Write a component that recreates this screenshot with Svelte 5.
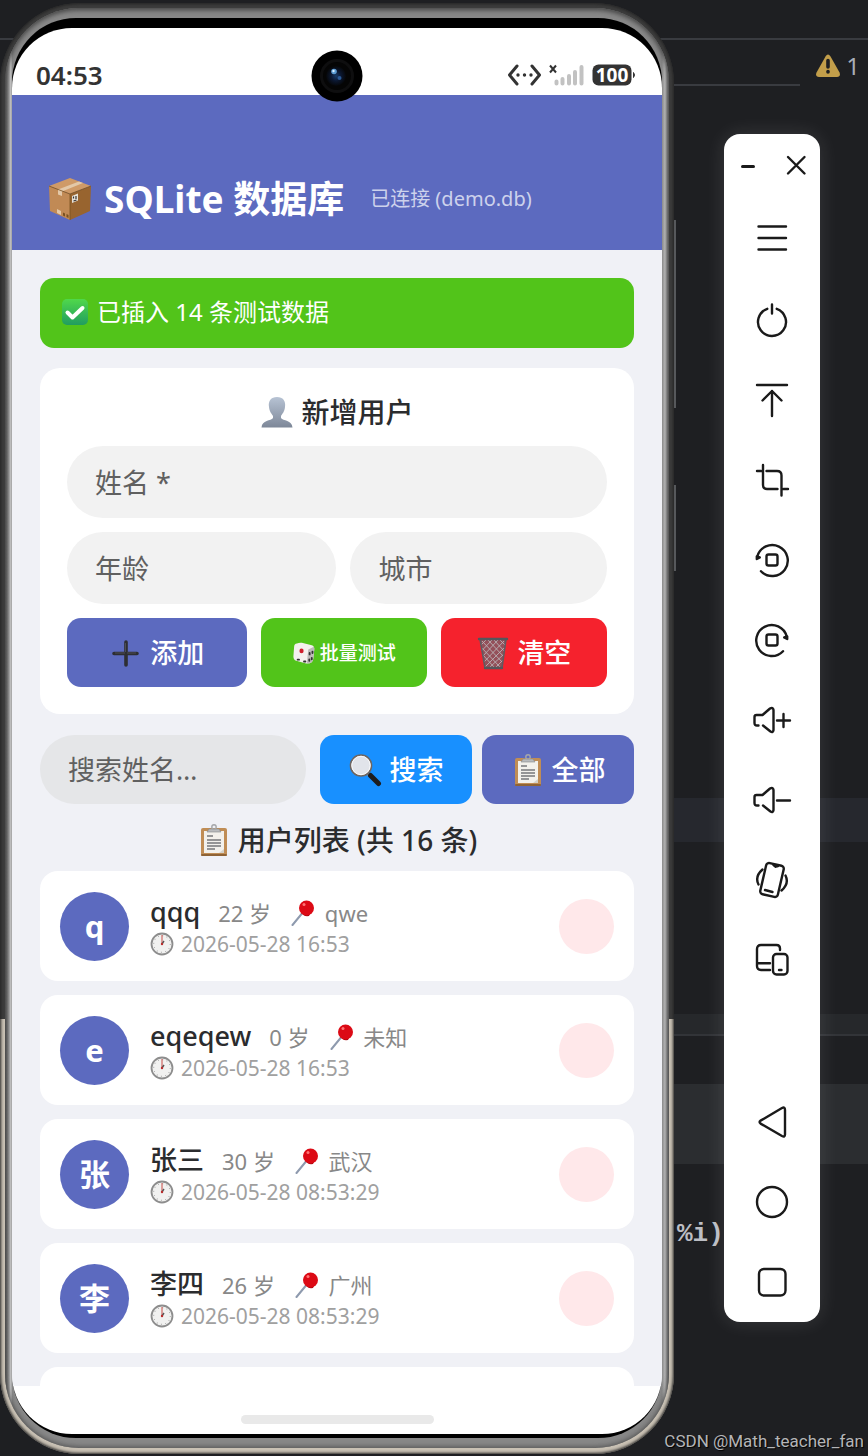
<script lang="ts">
  type User = { name: string; age: number; city: string; created: string };

  let users = $state<User[]>([
    { name: 'qqq', age: 22, city: 'qwe', created: '2026-05-28 16:53' },
    { name: 'eqeqew', age: 0, city: '未知', created: '2026-05-28 16:53' },
    { name: '张三', age: 30, city: '武汉', created: '2026-05-28 08:53:29' },
    { name: '李四', age: 26, city: '广州', created: '2026-05-28 08:53:29' },
  ]);

  let total = $state(16);
  let name = $state('');
  let age = $state('');
  let city = $state('');
  let keyword = $state('');

  const tools = ['menu', 'power', 'top', 'crop', 'left', 'right', 'louder', 'quieter', 'shake', 'devices'];
  const nav = ['back', 'home', 'recent'];
</script>

{#snippet clipboard()}
  <svg class="emoji" viewBox="0 0 34 34" aria-hidden="true">
    <rect x="4" y="5" width="26" height="28" rx="2" fill="#c08d55" />
    <rect x="4" y="31" width="26" height="2" rx="1" fill="#8f6335" />
    <path d="M7 8h20v22H7z" fill="#f3f1ec" />
    <path d="M22 30l5-4v4z" fill="#d5d2ca" />
    <path d="M10 13h6M10 17h14M10 20h14M10 23h14M10 26h8" stroke="#77777a" stroke-width="1.3" />
    <path d="M10 9l2-3h10l2 3z" fill="#b9bbbd" stroke="#85878a" stroke-width=".6" />
    <circle cx="17" cy="4" r="2.2" fill="none" stroke="#a5a7aa" stroke-width="1.4" />
  </svg>
{/snippet}

{#snippet tool(kind: string)}
  <svg class="tool" viewBox="0 0 40 40" aria-hidden="true">
    {#if kind === 'menu'}
      <path d="M6.500 6.500h27.500M6.500 18h27.500M6.500 29.500h27.500" />
    {:else if kind === 'power'}
      <path d="M15.300 8.800a14 14 0 1 0 9.400 0M20 4.500v9" />
    {:else if kind === 'top'}
      <path d="M5 5h30M20 36V11M10.500 20.500l9.500-9.500 9.500 9.500" />
    {:else if kind === 'crop'}
      <path d="M11 5v20q0 4 4 4h10.500M5 11h4M14.500 11H25q4.500 0 4.500 4.500V35.500M31.500 29H36" />
    {:else if kind === 'left' || kind === 'right'}
      <g transform={kind === 'right' ? 'translate(40 0) scale(-1 1)' : undefined}>
        <path d="M9 31.200A15.500 15.500 0 1 0 5.300 16.500" />
        <path d="M4.800 16.500v2.500l3-1.500z" fill="#1a1a1a" />
      </g>
      <rect x="14.500" y="14.500" width="11" height="11" rx="2" />
    {:else if kind === 'louder' || kind === 'quieter'}
      <path d="M6.500 25.500H5q-2.500 0-2.500-2.500v-6q0-2 2-2h6L18 8.500q3-1.500 3.500 1.500v20q-.5 3-3 1.500L11 25.500M25 20.500h13" />
      {#if kind === 'louder'}<path d="M31.500 14v13" />{/if}
    {:else if kind === 'shake'}
      <rect x="11" y="4" width="18" height="32" rx="3" transform="rotate(13 20 20)" />
      <path d="M21.500 5l2.200 1.700L26 6M13 30l7.500 2M10.500 9.500q-8 7-4 15M33.500 15.500q4 8-4 15" />
    {:else if kind === 'devices'}
      <path d="M18 30H9q-4 0-4-4V9q0-4 4-4h15.500q3.500 0 3.500 3.500V10M5 23.300h13" />
      <rect x="21" y="14" width="14.500" height="20.500" rx="3.500" />
      <path d="M27 30h2.500" />
    {:else if kind === 'back'}
      <path d="M8.600 18.600Q6.500 20 8.600 21.600L30 34q3 1.500 3-1.500V8q0-3.500-3-2z" />
    {:else if kind === 'home'}
      <circle cx="20" cy="20" r="15" />
    {:else}
      <rect x="7" y="7" width="26.500" height="26.500" rx="5" />
    {/if}
  </svg>
{/snippet}

<div class="desktop" lang="zh-CN">
  <div class="editor">
    <div class="line tabs"></div>
    <div class="line crumbs"></div>
    <div class="problems">
      <svg width="24" height="24" viewBox="0 0 24 24" aria-hidden="true">
        <path d="M9.500 2.500q2.500-4 5 0l9 16q1.500 4-2.500 4.500H3q-4-.5-2.500-4.500z" fill="#c29e4a" />
        <path d="M12 6.500v6.500M12 17.500v.5" stroke="#1e1f22" stroke-width="3.600" stroke-linecap="round" />
      </svg>
      <span>1</span>
    </div>
    <div class="band current"></div>
    <div class="band splitter"></div>
    <div class="band header"></div>
    <code>%i)</code>
  </div>

  <div class="phone">
    <i class="key volume"></i>
    <i class="key lock"></i>
    <div class="bezel">
      <div class="glass">
        <div class="screen">
          <div class="status">
            <time>04:53</time>
            <svg width="128" height="24" viewBox="0 0 128 24" aria-hidden="true">
              <path d="M9 3L1.500 12l7.500 9M24 3l7.500 9-7.500 9" fill="none" stroke="#333" stroke-width="3" stroke-linecap="round" stroke-linejoin="round" />
              <path d="M10 12h0M16.500 12h0M23 12h0" stroke="#333" stroke-width="3.400" stroke-linecap="round" />
              <path d="M42 2.500l6 7M48 2.500l-6 7" stroke="#333" stroke-width="2" />
              <path d="M48.500 18.500v2M54.500 16v4.500M61 13v7.500M67 9v11.500M73.500 4v16.500" stroke="#c2c2c2" stroke-width="4" stroke-linecap="round" />
              <rect x="84.500" y="1.500" width="39" height="21" rx="6" fill="#333" />
              <path d="M125.500 9.500q2 2.500 0 5z" fill="#333" stroke="#333" />
              <text x="104" y="19">100</text>
            </svg>
          </div>

          <header class="app-bar">
            <svg class="box" viewBox="0 0 44 44" aria-hidden="true">
              <path d="M1 9l21 8v26L2 34z" fill="#c18a55" />
              <path d="M22 17l21-8-1 25-20 9z" fill="#98642f" />
              <path d="M1 9L22 1l21 8-21 8z" fill="#cf9a67" />
              <path d="M10 12.500L31 4.500l4 1.500-21 8.500v4.500l-4-1.500z" fill="#e3c8a8" />
              <path d="M1 9l21 8 21-8M22 17v26" fill="none" stroke="#79501f" stroke-width=".8" />
              <path d="M24 19l6-2.500v7L24 26z" fill="#e8e2d8" />
              <path d="M25.500 19.500v2M28 19v3M25.500 24l3-1" stroke="#333" stroke-width="1.200" />
              <path d="M9 32l4 2v4l-4-2z" fill="#e3c8a8" />
              <path d="M15 35.500l2 1v3l-2-1zM18.500 37l2 1v3l-2-1z" fill="#79501f" />
            </svg>
            <h1>SQLite 数据库</h1>
            <p>已连接 (demo.db)</p>
          </header>

          <main>
            <div class="notice" role="status">
              <svg viewBox="0 0 28 28" aria-hidden="true">
                <defs>
                  <linearGradient id="tick" x2="0" y2="1">
                    <stop stop-color="#50d84b" />
                    <stop offset="1" stop-color="#219d60" />
                  </linearGradient>
                </defs>
                <rect x="1" y="1" width="26" height="26" rx="5" fill="url(#tick)" />
                <path d="M6.500 14.500l5 5 10-9.500" fill="none" stroke="#fff" stroke-width="4" stroke-linecap="round" stroke-linejoin="round" />
              </svg>
              已插入 14 条测试数据
            </div>

            <form class="panel" onsubmit={(e) => e.preventDefault()}>
              <h2>
                <svg class="emoji" viewBox="0 0 34 34" aria-hidden="true">
                  <defs>
                    <linearGradient id="bust" x2="0" y2="1">
                      <stop stop-color="#b7c3d4" />
                      <stop offset="1" stop-color="#7d8798" />
                    </linearGradient>
                  </defs>
                  <path d="M17 2c6 0 9 4 8 10-.5 5-3 7-4 9v2c2 3 11 2 11.500 9.500h-31C2 25 11 26 13 23v-2c-1-2-3.500-4-4-9-1-6 2-10 8-10z" fill="url(#bust)" />
                </svg>
                新增用户
              </h2>
              <input bind:value={name} placeholder="姓名 *" aria-label="姓名" />
              <div class="pair">
                <input bind:value={age} placeholder="年龄" aria-label="年龄" />
                <input bind:value={city} placeholder="城市" aria-label="城市" />
              </div>
              <div class="actions">
                <button class="primary">
                  <svg class="emoji" viewBox="0 0 34 34" aria-hidden="true">
                    <path d="M17 6v23M5 17.500h23" stroke="#2d2e32" stroke-width="3.600" stroke-linecap="round" />
                    <path d="M16.500 7v9M6 17h10M18 17h9" stroke="#55575d" stroke-width=".8" />
                  </svg>
                  添加
                </button>
                <button class="success small" type="button">
                  <svg class="emoji" viewBox="0 0 34 34" aria-hidden="true">
                    <path d="M3 8Q3 4 7 3.500Q10 2 14 2.500L28 6q4 1 3.500 6L30 26q-1 5-5 5.500L20 32 6 28q-4-1-4-6z" fill="#f4f1ee" />
                    <path d="M23 12l8-4q1 2 .5 5L30 26q-1 5-5 5.500l-4 .5z" fill="#bdbab8" />
                    <ellipse cx="13.500" cy="14" rx="3" ry="3.500" fill="#cf1f2c" />
                    <path d="M25 17v2M29 15v2M24.500 26v2M28 24v2M8 26.500h2M17 29h2" stroke="#333" stroke-width="2.600" stroke-linecap="round" />
                  </svg>
                  批量测试
                </button>
                <button class="danger" type="button">
                  <svg class="emoji" viewBox="0 0 34 34" aria-hidden="true">
                    <path d="M4 3h26l-4 29H9z" fill="#94505a" />
                    <path d="M5 9l5-5M5.500 15L16 4M7 20L22 4M8 26L28 5M9 31L29 11M14 31l14-13M20 31l7-7M29 9l-5-5M28 15L18 4M28 21L12 4M27 27L6 5M24 31L5 11M18 31L7 19" stroke="#b9b2b6" stroke-width=".9" />
                    <path d="M4 3h26l-4 29H9z" fill="none" stroke="#5f5a60" stroke-width="1.600" />
                    <path d="M3 3h28M9 32h17" stroke="#55565b" stroke-width="2.400" stroke-linecap="round" />
                  </svg>
                  清空
                </button>
              </div>
            </form>

            <div class="search">
              <input type="search" bind:value={keyword} placeholder="搜索姓名…" aria-label="搜索姓名" />
              <button class="info">
                <svg class="emoji" viewBox="0 0 34 34" aria-hidden="true">
                  <path d="M19 21l3 3" stroke="#999" stroke-width="3" />
                  <path d="M21.500 22.500l8 8" stroke="#1d1d1f" stroke-width="5" stroke-linecap="round" />
                  <circle cx="12" cy="12.500" r="10.500" fill="#e1e4ea" stroke="#6f6661" stroke-width="1.600" />
                  <circle cx="12" cy="12.500" r="9.200" fill="none" stroke="#fafafa" />
                </svg>
                搜索
              </button>
              <button class="primary">{@render clipboard()}全部</button>
            </div>

            <h2 class="list-title">{@render clipboard()}用户列表 (共 {total} 条)</h2>

            <ul>
              {#each users as user}
                <li>
                  <span class="avatar">{user.name[0]}</span>
                  <div class="info-col">
                    <div class="who">
                      <strong>{user.name}</strong>
                      <span>{user.age} 岁</span>
                      <span class="city">
                        <svg width="24" height="26" viewBox="0 0 24 26" aria-hidden="true">
                          <path d="M13 11L1.500 25" stroke="#8e9aae" stroke-width="2" stroke-linecap="round" />
                          <path d="M11 10q3 5 8 4l-1 2q-6 1-8-4z" fill="#a90710" />
                          <circle cx="15.500" cy="8" r="7.500" fill="#dc0a15" />
                          <circle cx="13" cy="4.500" r="1.500" fill="#ff7475" />
                        </svg>
                        {user.city}
                      </span>
                    </div>
                    <div class="when">
                      <svg width="24" height="24" viewBox="0 0 24 24" aria-hidden="true">
                        <circle cx="12" cy="12" r="10.500" fill="#f1f1f0" stroke="#8d8d8d" stroke-width="1.800" />
                        <circle cx="12" cy="12" r="8.300" fill="none" stroke="#999" stroke-width="1" stroke-dasharray="1 3.346" />
                        <path d="M12 12V3" stroke="#c94a45" />
                        <path d="M12 12l2-3" stroke="#555" stroke-width="1.400" />
                        <circle cx="12" cy="12" r="1.200" fill="#b92d2d" />
                      </svg>
                      {user.created}
                    </div>
                  </div>
                  <button class="remove" aria-label="删除"></button>
                </li>
              {/each}
              <li></li>
            </ul>
          </main>

          <div class="gesture"><i></i></div>
        </div>
      </div>
    </div>
    <svg class="camera" viewBox="0 0 52 52" aria-hidden="true">
      <defs>
        <radialGradient id="lens">
          <stop stop-color="#173a66" />
          <stop offset=".5" stop-color="#0b1730" />
          <stop offset="1" stop-color="#060709" />
        </radialGradient>
      </defs>
      <circle cx="26" cy="26" r="25.500" fill="#000" />
      <circle cx="26" cy="26" r="15.500" fill="#050505" stroke="#0e0e0f" stroke-width="3" />
      <circle cx="25" cy="26" r="10" fill="url(#lens)" />
      <circle cx="23" cy="21.500" r="2.800" fill="#5b9bd2" />
      <circle cx="22.500" cy="21" r="1.200" fill="#d8f0ff" />
      <circle cx="28.500" cy="28" r="2" fill="#2b5a96" />
    </svg>
  </div>

  <aside>
    <div class="window">
      <button aria-label="Minimize">
        <svg class="tool" viewBox="0 0 40 40" aria-hidden="true"><path d="M14.500 21.500h11" stroke-width="3" /></svg>
      </button>
      <button aria-label="Close">
        <svg class="tool" viewBox="0 0 40 40" aria-hidden="true"><path d="M12 12l16.500 16.500M28.500 12L12 28.500" /></svg>
      </button>
    </div>
    {#each tools as kind}
      <button aria-label={kind}>{@render tool(kind)}</button>
    {/each}
    <div class="nav">
      {#each nav as kind}
        <button aria-label={kind}>{@render tool(kind)}</button>
      {/each}
    </div>
  </aside>

  <p class="watermark">CSDN @Math_teacher_fan</p>
</div>

<style>
  :global(body) {
    margin: 0;
    background: #1e1f22;
  }

  .desktop,
  .desktop :global(*) {
    box-sizing: border-box;
  }

  .desktop {
    position: relative;
    display: grid;
    grid-template-columns: minmax(0, 1fr) 96px;
    align-items: start;
    column-gap: 50px;
    height: 100vh;
    padding-right: 48px;
    overflow: hidden;
    background: #1e1f22;
    font-family: "Noto Sans", "Noto Sans CJK SC", sans-serif;
    color: #2b2c2e;
  }

  h1,
  h2,
  p,
  ul {
    margin: 0;
    padding: 0;
  }

  button,
  input {
    min-width: 0;
    margin: 0;
    border: 0;
    font: inherit;
  }

  /* editor behind the windows */
  .editor {
    position: absolute;
    inset: 0;
  }

  .editor .line {
    position: absolute;
    left: 0;
    right: 0;
    height: 2px;
    background: #393b40;
  }

  .line.tabs {
    top: 38px;
  }

  .editor .crumbs {
    top: 84px;
    right: 68px;
  }

  .problems {
    position: absolute;
    top: 50px;
    right: 8px;
    display: flex;
    align-items: center;
    gap: 6px;
    color: #a8adb8;
    font-size: 24px;
    line-height: 32px;
  }

  .band {
    position: absolute;
    left: 0;
    right: 0;
  }

  .band.current {
    top: 798px;
    height: 44px;
    background: #26282e;
  }

  .band.splitter {
    top: 1014px;
    height: 22px;
    border-bottom: 2px solid #323438;
    background: #26282b;
  }

  .band.header {
    top: 1084px;
    height: 80px;
    background: #2b2d30;
  }

  .editor code {
    position: absolute;
    top: 1218px;
    left: 677px;
    color: #bcbec4;
    font-family: "Liberation Mono", monospace;
    font-size: 26px;
    font-weight: 700;
    line-height: 32px;
  }

  /* phone */
  .phone {
    position: relative;
    height: calc(100vh - 5px);
    margin-top: 3px;
    padding: 5px 5px 6px;
    border-radius: 80px;
    background: linear-gradient(#3c3c3c 70%, #c9c1b4 70%);
    box-shadow: inset 0 0 3px 1px #242424;
  }

  .bezel {
    height: 100%;
    padding: 10px 7px;
    border-radius: 74px;
    background: linear-gradient(90deg, #444, #999 4px, #ccc 6px, #888 7px, #888 calc(100% - 7px), #bbb calc(100% - 4px), #666);
    box-shadow: inset 0 2px 5px #444, inset 0 -2px 5px #666;
  }

  .glass {
    height: 100%;
    padding: 10px 0 4px;
    border-radius: 64px;
    background: #000;
  }

  .screen {
    display: flex;
    flex-direction: column;
    height: 100%;
    overflow: hidden;
    border-radius: 60px;
    background: #fff;
  }

  .key {
    position: absolute;
    right: -2px;
    width: 2px;
    background: #56585b;
  }

  .key.volume {
    top: 217px;
    height: 188px;
  }

  .key.lock {
    top: 482px;
    height: 86px;
  }

  .camera {
    position: absolute;
    top: 47px;
    left: calc(50% - 26px);
    width: 52px;
    height: 52px;
  }

  .status {
    display: flex;
    flex: none;
    align-items: center;
    justify-content: space-between;
    height: 67px;
    padding: 26px 26px 0 24px;
    color: #333;
    font-size: 26px;
    font-weight: 600;
    line-height: 38px;
  }

  .status text {
    fill: #fff;
    font-size: 19px;
    font-weight: 700;
    text-anchor: middle;
  }

  .app-bar {
    display: flex;
    flex: none;
    align-items: center;
    height: 155px;
    padding: 80px 36px 27px;
    background: #5c6abf;
    color: #fff;
  }

  .box {
    flex: none;
    width: 44px;
    height: 44px;
    margin-right: 12px;
  }

  h1 {
    font-size: 37px;
    font-weight: 700;
    line-height: 48px;
    white-space: nowrap;
  }

  .app-bar p {
    margin-left: 26px;
    color: #cdd2ec;
    font-size: 20px;
    line-height: 28px;
    white-space: nowrap;
  }

  main {
    display: flex;
    flex: 1;
    flex-direction: column;
    min-height: 0;
    padding: 28px 28px 0;
    overflow: hidden;
    background: #f0f1f6;
  }

  main > * {
    flex: none;
  }

  .notice {
    display: flex;
    align-items: center;
    gap: 8px;
    height: 70px;
    padding: 0 21px 2px;
    border-radius: 14px;
    background: #52c41a;
    color: #fff;
    font-size: 24px;
    line-height: 32px;
  }

  .notice svg {
    width: 28px;
    height: 28px;
  }

  .panel {
    display: flex;
    flex-direction: column;
    gap: 14px;
    margin-top: 20px;
    padding: 24px 27px 27px;
    border-radius: 20px;
    background: #fff;
  }

  h2 {
    display: flex;
    align-items: center;
    justify-content: center;
    gap: 7px;
    font-size: 28px;
    font-weight: 500;
    line-height: 40px;
    white-space: nowrap;
  }

  .emoji {
    flex: none;
    width: 34px;
    height: 34px;
  }

  input {
    width: 100%;
    height: 72px;
    padding: 0 28px;
    border-radius: 36px;
    outline: none;
    background: #f2f2f2;
    font-size: 27px;
  }

  input::placeholder {
    color: #606060;
    opacity: 1;
  }

  .pair,
  .actions {
    display: grid;
    gap: 14px;
  }

  .pair {
    grid-template-columns: 1.05fr 1fr;
  }

  .actions {
    grid-template-columns: 1.08fr 1fr 1fr;
  }

  .actions button,
  .search button {
    display: flex;
    align-items: center;
    justify-content: center;
    gap: 7px;
    height: 69px;
    padding: 0;
    border-radius: 14px;
    color: #fff;
    font-size: 27px;
    font-weight: 500;
    line-height: 38px;
    white-space: nowrap;
  }

  .actions .small {
    gap: 4px;
    font-size: 19px;
  }

  .small .emoji {
    width: 24px;
    height: 24px;
  }

  .primary {
    background: #5c6abf;
  }

  .success {
    background: #52c41a;
  }

  .danger {
    background: #f5222d;
  }

  .info {
    background: #1890ff;
  }

  .search {
    display: grid;
    grid-template-columns: 1fr 152px 152px;
    gap: 10px;
    margin-top: 21px;
  }

  .search input {
    width: calc(100% - 4px);
    height: 69px;
    background: #e5e6e8;
    appearance: none;
  }

  .list-title {
    margin: 16px 0 11px;
  }

  ul {
    display: flex;
    flex-direction: column;
    gap: 14px;
    list-style: none;
  }

  li {
    display: flex;
    align-items: center;
    gap: 21px;
    height: 110px;
    padding: 0 20px;
    border-radius: 18px;
    background: #fff;
  }

  .avatar {
    display: flex;
    flex: none;
    align-items: center;
    justify-content: center;
    width: 69px;
    height: 69px;
    border-radius: 50%;
    background: #5c6abf;
    color: #fff;
    font-size: 31px;
    font-weight: 700;
    line-height: 40px;
  }

  .info-col {
    flex: 1;
    min-width: 0;
    padding-top: 4px;
  }

  .who {
    display: flex;
    align-items: baseline;
    gap: 18px;
    height: 32px;
    color: #888;
    font-size: 22px;
    line-height: 32px;
    white-space: nowrap;
  }

  .who strong {
    color: #2b2c2e;
    font-size: 27px;
    font-weight: 500;
  }

  .city svg {
    margin: 0 4px 0 2px;
    vertical-align: -4px;
  }

  .when {
    display: flex;
    align-items: center;
    gap: 7px;
    color: #a0a0a0;
    font-size: 21px;
    line-height: 32px;
    white-space: nowrap;
  }

  .remove {
    flex: none;
    width: 55px;
    height: 55px;
    border-radius: 50%;
    background: #ffe8ea;
  }

  .gesture {
    display: flex;
    flex: none;
    align-items: flex-end;
    justify-content: center;
    height: 48px;
    padding-bottom: 10px;
  }

  .gesture i {
    width: 193px;
    height: 9px;
    border-radius: 5px;
    background: #e9e9e9;
  }

  /* emulator toolbar */
  aside {
    position: relative;
    margin-top: 134px;
    border-radius: 16px;
    background: #fff;
    box-shadow: 0 0 20px rgba(255, 255, 255, 0.12);
  }

  aside button {
    display: flex;
    align-items: center;
    justify-content: center;
    width: 100%;
    height: 80px;
    padding: 0;
    background: none;
  }

  .window {
    display: flex;
    height: 66px;
  }

  .window button {
    height: 62px;
  }

  .nav {
    margin-top: 82px;
  }

  .tool {
    flex: none;
    width: 40px;
    height: 40px;
    fill: none;
    stroke: #1a1a1a;
    stroke-width: 2.4;
    stroke-linecap: round;
    stroke-linejoin: round;
  }

  .watermark {
    position: absolute;
    right: 4px;
    bottom: 4px;
    color: #b4b5b7;
    font-family: Roboto, sans-serif;
    font-size: 17px;
    line-height: 22px;
    text-shadow: 1px 1px 1px #000;
  }
</style>
